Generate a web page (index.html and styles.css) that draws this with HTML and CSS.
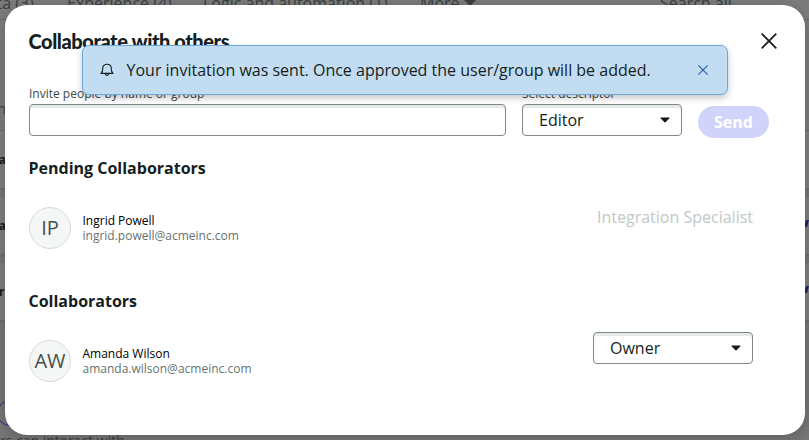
FILE: index.html
```html
<!DOCTYPE html>
<html lang="en">
<head>
<meta charset="utf-8">
<title>Collaborate with others</title>
<link rel="stylesheet" href="styles.css">
</head>
<body>
<div class="page">
  <nav class="tabs"><span class="tab-data">Data (3)</span><span class="tab-exp">Experience (4)</span><span class="tab-logic">Logic and automation (1)</span><span class="tab-more">More <svg width="12" height="8" viewBox="0 0 12 8"><path d="M0 2Q0 0 2 0H10Q12 0 12 2L6 8Z" fill="currentColor"/></svg></span><span>Search all</span></nav>
  <div class="column-head">n</div>
  <div class="card"><b class="ca">Ca</b></div>
  <div class="card"><b class="ca">Ca</b><i></i></div>
  <div class="card"><b class="er">er</b><i></i></div>
  <div class="persona"><div class="ring"></div><p>rs can interact with</p></div>
</div>
<main class="modal">
  <header class="head">
    <h1>Collaborate with others</h1>
    <svg class="close" width="16" height="16" viewBox="0 0 16 16"><path d="M.7.7 15.3 15.3M15.3.7.7 15.3" stroke="#151e21" stroke-width="1.7" fill="none"/></svg>
  </header>
  <div class="form">
    <label class="people"><span>Invite people by name or group</span><div class="field"></div></label>
    <label class="role"><span>Select descriptor</span><div class="field"><span class="value">Editor</span><svg width="10" height="6" viewBox="0 0 10 6"><path d="M1 .5H9Q10 .5 9.4 1.3L5.8 5Q5 5.8 4.2 5L.6 1.3Q0 .5 1 .5Z" fill="#10191b"/></svg></div></label>
    <button class="send">Send</button>
  </div>
  <h2>Pending Collaborators</h2>
  <div class="person">
    <div class="avatar">IP</div>
    <div class="info"><div class="name">Ingrid Powell</div><div class="mail">ingrid.powell@acmeinc.com</div></div>
    <span class="pending">Integration Specialist</span>
  </div>
  <h2 class="second">Collaborators</h2>
  <div class="person">
    <div class="avatar">AW</div>
    <div class="info"><div class="name">Amanda Wilson</div><div class="mail">amanda.wilson@acmeinc.com</div></div>
    <div class="field owner"><span class="value">Owner</span><svg width="10" height="6" viewBox="0 0 10 6"><path d="M1 .5H9Q10 .5 9.4 1.3L5.8 5Q5 5.8 4.2 5L.6 1.3Q0 .5 1 .5Z" fill="#10191b"/></svg></div>
  </div>
</main>
<aside class="toast">
  <svg class="bell" width="14" height="14" viewBox="0 0 14 14" fill="none" stroke="#10201f" stroke-width="1.1"><path d="M1 10.4Q2.7 9 2.7 6V5.4C2.7 2.8 4.4 1.2 7 1.2S11.3 2.8 11.3 5.4V6Q11.3 9 13 10.4Z" stroke-linejoin="round"/><path d="M5.2 10.8Q5.4 12.4 7 12.4T8.8 10.8"/></svg>
  <span>Your invitation was sent. Once approved the user/group will be added.</span>
  <svg class="dismiss" width="10" height="10" viewBox="0 0 10 10"><path d="M.4.4 9.6 9.6M9.6.4.4 9.6" stroke="#1f5fa8" stroke-width="1.1"/></svg>
</aside>
</body>
</html>
```
FILE: styles.css
```css
* { box-sizing: border-box; }
body { margin: 0; width: 809px; height: 440px; overflow: hidden; position: relative; font-family: "Open Sans", "Noto Sans", sans-serif; background: #737373; color: #151e21; }
h1, h2, p { margin: 0; }
.page { height: 440px; overflow: hidden; background: #757575; color: #3a4040; }
.tabs { display: flex; font-size: 16px; line-height: 22px; margin-top: -8px; height: 28px; border-bottom: 1px solid #696969; background: #7c7c7c; white-space: nowrap; }
.tab-data { margin-left: -24px; width: 91px; }
.tab-exp { width: 136px; }
.tab-logic { width: 217px; }
.tab-more { width: 240px; }
.tab-more svg { vertical-align: 3px; }
.column-head { height: 111px; padding-top: 78px; font-size: 15px; line-height: 20px; text-indent: -3px; background: #7b7b7b; border-bottom: 1px solid #6e6e6e; }
.card { height: 57px; margin-bottom: 9px; display: flex; justify-content: space-between; align-items: center; font-size: 12px; background: #7e7e7e; box-shadow: 0 1px 2px #666; color: #181d1d; }
.card .ca { margin-left: -9px; }
.card .er { margin-left: -8px; }
.card i { width: 3px; height: 7px; margin: -4px 1px 0 0; background: #20256e; transform: skewX(-15deg); }
.persona { padding-top: 71px; font-size: 14px; line-height: 20px; }
.ring { width: 26px; height: 26px; margin-left: -3px; border: 1px solid #292f84; border-radius: 50%; }
.persona p { margin-top: 5px; }
.modal { position: absolute; left: 5px; top: 5px; width: 800px; height: 430px; padding: 25px 36px 0 24px; border-radius: 22px; background: #fff; box-shadow: 0 2px 14px rgba(0,0,0,.2); }
.head { display: flex; justify-content: space-between; height: 56px; }
h1 { font: 900 20px/22px Lato, sans-serif; letter-spacing: -.42px; margin-left: -.5px; white-space: nowrap; }
.close { margin: 3px -8px 0 0; }
.form { display: flex; align-items: flex-start; gap: 16px; }
.form label { display: block; font-size: 12px; line-height: 16px; color: #3b4948; }
.form label > span { display: block; height: 18px; }
.people { width: 477px; }
.role { width: 160px; }
.field { height: 32px; display: flex; align-items: center; justify-content: space-between; border: 1px solid #7b8887; border-radius: 4px; padding: 0 11px 0 16px; background: #fff; box-shadow: inset 0 3px 0 #e7e9e9; font-size: 16px; line-height: 30px; color: #151e21; }
.send { flex: none; width: 71px; height: 32px; margin-top: 20px; padding: 0; border: 0; border-radius: 16px; background: #d0d4fa; color: #fff; font: bold 16px "Open Sans", sans-serif; }
h2 { font-size: 16px; line-height: 22px; margin-top: 19px; margin-left: -.5px; font-weight: 700; }
.person { display: flex; align-items: center; height: 42px; margin-top: 28px; width: 724px; }
.avatar { width: 42px; height: 42px; border: 1px solid #d5dbd9; border-radius: 50%; background: #f5f7f6; font-size: 20px; line-height: 40px; text-align: center; color: #46504f; }
.info { margin-left: 11.5px; flex: 1; font-size: 12px; line-height: 15px; color: #000; }
.mail { color: #657371; }
.pending { color: #c0c8c8; font-size: 16px; line-height: 22px; margin-top: -22px; }
.second { margin-top: 41px; }
.owner { width: 160px; margin-top: -26px; }
.toast { position: absolute; left: 82px; top: 45px; width: 646px; height: 50px; display: flex; align-items: center; padding: 0 19px 0 17px; border: 1px solid #69a9df; border-radius: 7px; background: #c2dcf1; box-shadow: 0 3px 7px rgba(0,0,0,.23); font-size: 16px; white-space: nowrap; }
.toast span { margin-left: 12.5px; flex: 1; }
```
